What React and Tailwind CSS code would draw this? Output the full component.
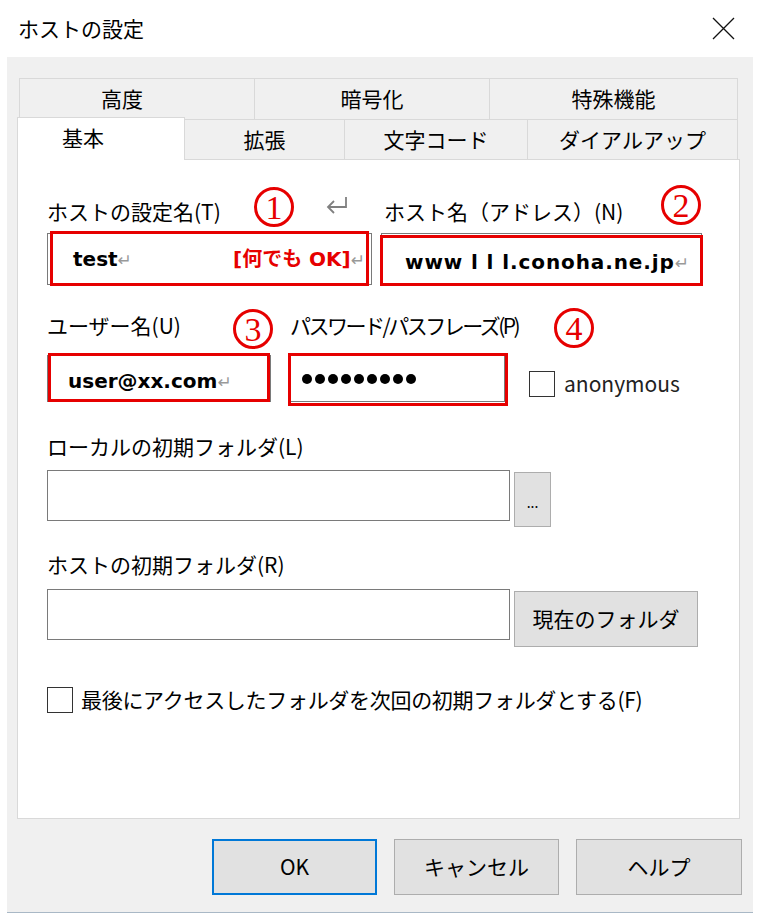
import React from 'react';

const ui = "font-['Noto_Sans_CJK_JP','Noto_Sans',sans-serif]";
const val = "font-['DejaVu_Sans','Noto_Sans_CJK_JP',sans-serif] font-bold";

const Num = ({ n }) => (
    <span className="inline-flex w-[40px] h-[40px] rounded-full border-[3px] border-[#e60000] items-center justify-center text-[#e60000] font-['Liberation_Serif',serif] text-[34px] leading-none pt-[2px]">
        {n}
    </span>
);

const Ret = () => (
    <span className="font-['DejaVu_Sans',sans-serif] text-[17px] font-normal text-[#999]">↵</span>
);

const BigRet = () => (
    <svg width="22" height="18" viewBox="0 0 22 18">
        <path d="M20 1 V11 H2 M8 5 L2 11 L8 17" stroke="#808080" strokeWidth="1.8" fill="none" />
    </svg>
);

const Check = () => <div className="w-[26px] h-[26px] border border-[#333] bg-white shrink-0" />;

const App = () => {
    return (
        <div className={`w-[757px] h-[915px] bg-white text-black ${ui}`}>
            {/* title bar */}
            <div className="h-[57px] flex items-center justify-between pl-[18px] pr-[22px]">
                <span className="text-[21px]">ホストの設定</span>
                <svg width="23" height="23" viewBox="0 0 23 23">
                    <path d="M1 1 L22 22 M22 1 L1 22" stroke="#111" strokeWidth="1.3" />
                </svg>
            </div>

            <div className="ml-[7px] w-[746px] h-[856px] bg-[#f0f0f0] border-b border-[#a9b8c6] pt-[21px] pl-[10px]">
                {/* tabs */}
                <div className="ml-[2px] w-[719px] h-[41px] flex text-[21px]">
                    <div className="w-[235px] border-t border-l border-[#d9d9d9] flex items-center justify-center pr-[30px]">高度</div>
                    <div className="w-[235px] border-t border-l border-[#d9d9d9] flex items-center justify-center">暗号化</div>
                    <div className="w-[249px] border-t border-l border-r border-[#d9d9d9] flex items-center justify-center">特殊機能</div>
                </div>
                <div className="w-[721px] h-[40px] flex items-end text-[21px]">
                    <div className="relative z-10 w-[168px] h-[43px] -mb-px bg-white border-t border-l border-r border-[#d9d9d9] flex items-center pl-[44px] pb-[3px]">基本</div>
                    <div className="w-[160px] h-[40px] border-t border-r border-[#d9d9d9] flex items-center justify-center">拡張</div>
                    <div className="w-[183px] h-[40px] border-t border-r border-[#d9d9d9] flex items-center justify-center">文字コード</div>
                    <div className="w-[210px] h-[40px] border-t border-r border-[#d9d9d9] flex items-center justify-center">ダイアルアップ</div>
                </div>

                {/* panel */}
                <div className="w-[723px] h-[660px] bg-white border border-[#d9d9d9] pl-[29px] text-[21px]">
                    <div className="mt-[32px] h-[40px] flex items-center">
                        <div className="w-[207px] whitespace-nowrap">ホストの設定名(T)</div>
                        <div className="w-[40px] -mt-[10px]"><Num n="1" /></div>
                        <div className="w-[32px]" />
                        <div className="w-[22px] -mt-[14px]"><BigRet /></div>
                        <div className="w-[36px]" />
                        <div className="w-[277px] whitespace-nowrap">ホスト名（アドレス）(N)</div>
                        <div className="w-[40px] -mt-[14px]"><Num n="2" /></div>
                    </div>

                    <div className="mt-px h-[52px] flex">
                        <div className="relative w-[325px] h-[52px] border border-[#7a7a7a] flex items-center pl-[25px] pr-[6px]">
                            <div className="absolute left-[2px] right-[2px] -top-[3px] -bottom-[2px] border-[3px] border-[#e60000]" />
                            <span className={`${val} text-[20px]`}>test<Ret /></span>
                            <span className={`${val} ml-auto text-[20px] text-[#e60000] whitespace-nowrap`}>[何でも OK]<Ret /></span>
                        </div>
                        <div className="relative ml-[9px] w-[321px] h-[52px] border border-[#7a7a7a] flex items-center pl-[23px]">
                            <div className="absolute -left-[2px] -right-[2px] top-[1px] -bottom-[2px] border-[3px] border-[#e60000]" />
                            <span className={`${val} text-[20px] tracking-[0.9px] mt-[6px] whitespace-nowrap`}>www l l l.conoha.ne.jp<Ret /></span>
                        </div>
                    </div>

                    <div className="mt-[21px] h-[40px] flex items-center">
                        <div className="w-[186px] whitespace-nowrap">ユーザー名(U)</div>
                        <div className="w-[39px] mt-[6px]"><Num n="3" /></div>
                        <div className="w-[18px]" />
                        <div className="w-[264px] whitespace-nowrap tracking-[-2.5px]">パスワード/パスフレーズ(P)</div>
                        <div className="w-[40px] mt-[4px]"><Num n="4" /></div>
                    </div>

                    <div className="mt-[9px] h-[47px] flex items-center">
                        <div className="relative w-[224px] h-[47px] border border-[#7a7a7a] flex items-center pl-[20px]">
                            <div className="absolute inset-x-0 -top-[3px] -bottom-px border-[3px] border-[#e60000]" />
                            <span className={`${val} text-[20px] mt-[5px] whitespace-nowrap`}>user@xx.com<Ret /></span>
                        </div>
                        <div className="relative ml-[19px] w-[215px] h-[47px] border border-[#7a7a7a] flex items-center gap-[3px] pl-[11px]">
                            <div className="absolute -left-[3px] -right-[4px] -top-[3px] -bottom-[5px] border-[3px] border-[#e60000]" />
                            {Array.from({ length: 9 }).map((_, i) => (
                                <span key={i} className="w-[10px] h-[10px] rounded-full bg-black" />
                            ))}
                        </div>
                        <div className="ml-[24px] mt-[10px] flex items-center">
                            <Check />
                            <span className="ml-[9px] text-[21px] text-[#222]">anonymous</span>
                        </div>
                    </div>

                    <div className="mt-[25px] h-[40px] flex items-center">ローカルの初期フォルダ(L)</div>
                    <div className="mt-[3px] flex items-start">
                        <div className="w-[463px] h-[51px] border border-[#7a7a7a]" />
                        <div className="ml-[4px] mt-[2px] w-[37px] h-[55px] bg-[#e1e1e1] border border-[#adadad] flex items-center justify-center text-[14px] pt-[6px]">...</div>
                    </div>

                    <div className="mt-[18px] h-[40px] flex items-center">ホストの初期フォルダ(R)</div>
                    <div className="mt-[4px] flex items-start">
                        <div className="w-[463px] h-[51px] border border-[#7a7a7a]" />
                        <div className="ml-[4px] mt-[2px] w-[184px] h-[56px] bg-[#e1e1e1] border border-[#adadad] flex items-center justify-center">現在のフォルダ</div>
                    </div>

                    <div className="mt-[37px] flex items-center">
                        <Check />
                        <span className="ml-[8px] text-[21px] tracking-[-0.3px]">最後にアクセスしたフォルダを次回の初期フォルダとする(F)</span>
                    </div>
                </div>

                {/* buttons */}
                <div className="mt-[20px] flex gap-[17px] pl-[195px] text-[21px]">
                    <button className="w-[165px] h-[56px] bg-[#e1e1e1] border-2 border-[#0078d7]">OK</button>
                    <button className="w-[165px] h-[56px] bg-[#e1e1e1] border border-[#adadad]">キャンセル</button>
                    <button className="w-[166px] h-[56px] bg-[#e1e1e1] border border-[#adadad]">ヘルプ</button>
                </div>
            </div>
        </div>
    );
};

export default App;
